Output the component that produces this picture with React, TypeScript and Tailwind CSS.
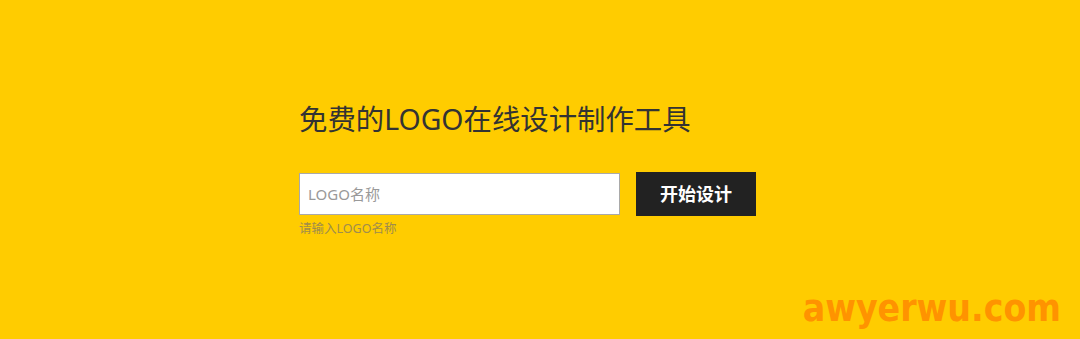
export default function App() {
  return (
    <div
      className="relative h-[339px] w-[1080px] overflow-hidden bg-[#ffcc00]"
      style={{ fontFamily: '"Noto Sans", "Noto Sans CJK SC", sans-serif' }}
    >
      <div className="pl-[299px] pt-[99px]">
        <h1 className="text-[28.4px] leading-[40px] font-normal text-[#333333]">
          免费的LOGO在线设计制作工具
        </h1>

        <form className="mt-[33px] flex items-start gap-4">
          <div className="flex flex-col">
            <input
              type="text"
              placeholder="LOGO名称"
              className="mt-px h-[42px] w-[321px] border border-[#a9a9a9] bg-white px-2 text-[15px] text-[#333] outline-none placeholder:text-[#999999]"
            />
            <p className="mt-[6px] text-[12.5px] leading-[16px] text-[#a08d4c]">
              请输入LOGO名称
            </p>
          </div>
          <button
            type="button"
            className="h-[44px] w-[120px] bg-[#222222] text-[18px] font-bold text-white"
          >
            开始设计
          </button>
        </form>
      </div>

      <div
        className="absolute right-[19px] bottom-[12px] text-[37px] leading-none font-bold text-[#ff9300]"
        style={{ fontFamily: '"DejaVu Sans Condensed", "DejaVu Sans", sans-serif', fontStretch: "condensed" }}
      >
        awyerwu.com
      </div>
    </div>
  );
}
